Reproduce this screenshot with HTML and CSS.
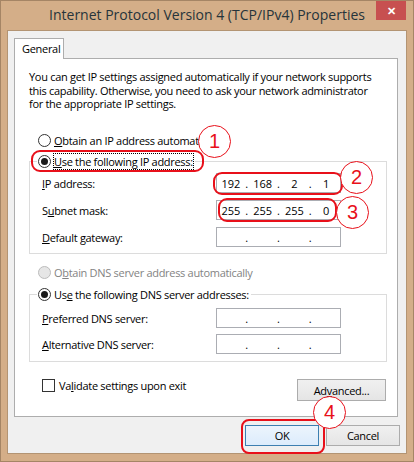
FILE: index.html
```html
<!DOCTYPE html>
<html lang="en">
<head>
    <meta name="viewport" content="width=device-width, initial-scale=1">
    <title>Internet Protocol Version 4 (TCP/IPv4) Properties</title>
    <link rel="stylesheet" href="styles.css">
</head>
<body>

    <div class="window">
        <div class="titlebar">
            <span></span>
            <span class="title">Internet Protocol Version 4 (TCP/IPv4) Properties</span>
            <span class="close-btn">&#x2715;</span>
        </div>

        <div class="client">
            <div class="tabs">
                <div class="tab">General</div>
            </div>

            <div class="panel">
                <p class="intro">You can get IP settings assigned automatically if your network supports this capability. Otherwise, you need to ask your network administrator for the appropriate IP settings.</p>

                <div class="option-row">
                    <span class="radio"></span>
                    <span class="label"><u>O</u>btain an IP address automatically</span>
                </div>

                <fieldset class="group">
                    <legend>
                        <span class="radio checked"></span>
                        <span class="label focused"><u>U</u>se the following IP address:</span>
                    </legend>
                    <div class="field-row">
                        <span class="field-label"><u>I</u>P address:</span>
                        <div class="ip-box">
                            <span>192</span><i>.</i><span>168</span><i>.</i><span>2</span><i>.</i><span>1</span>
                        </div>
                    </div>
                    <div class="field-row">
                        <span class="field-label">S<u>u</u>bnet mask:</span>
                        <div class="ip-box">
                            <span>255</span><i>.</i><span>255</span><i>.</i><span>255</span><i>.</i><span>0</span>
                        </div>
                    </div>
                    <div class="field-row">
                        <span class="field-label"><u>D</u>efault gateway:</span>
                        <div class="ip-box">
                            <span></span><i>.</i><span></span><i>.</i><span></span><i>.</i><span></span>
                        </div>
                    </div>
                </fieldset>

                <div class="option-row dns-auto disabled">
                    <span class="radio"></span>
                    <span class="label">O<u>b</u>tain DNS server address automatically</span>
                </div>

                <fieldset class="group dns-group">
                    <legend>
                        <span class="radio checked"></span>
                        <span class="label">Us<u>e</u> the following DNS server addresses:</span>
                    </legend>
                    <div class="field-row">
                        <span class="field-label"><u>P</u>referred DNS server:</span>
                        <div class="ip-box">
                            <span></span><i>.</i><span></span><i>.</i><span></span><i>.</i><span></span>
                        </div>
                    </div>
                    <div class="field-row">
                        <span class="field-label"><u>A</u>lternative DNS server:</span>
                        <div class="ip-box">
                            <span></span><i>.</i><span></span><i>.</i><span></span><i>.</i><span></span>
                        </div>
                    </div>
                </fieldset>

                <div class="bottom-row">
                    <div class="check-row">
                        <span class="checkbox"></span>
                        <span class="label">Va<u>l</u>idate settings upon exit</span>
                    </div>
                    <button class="btn advanced-btn">Ad<u>v</u>anced...</button>
                </div>
            </div>

            <div class="dialog-buttons">
                <button class="btn ok-btn">OK</button>
                <button class="btn">Cancel</button>
            </div>
        </div>

        <!-- Annotation marks -->
        <div class="mark mark-radio"></div>
        <div class="mark mark-ip"></div>
        <div class="mark mark-mask"></div>
        <div class="mark mark-ok"></div>
        <div class="num num-1">1</div>
        <div class="num num-2">2</div>
        <div class="num num-3">3</div>
        <div class="num num-4">4</div>
    </div>

</body>
</html>
```
FILE: styles.css
```css
/* General */
body {
    margin: 0;
    padding: 0;
    font-family: "Open Sans", "Noto Sans", sans-serif;
    font-size: 11px;
    letter-spacing: -0.3px;
    color: #000;
}

u { text-decoration: underline; text-underline-offset: 1px; }

/* Window frame */
.window {
    position: relative;
    width: 414px;
    height: 462px;
    box-sizing: border-box;
    background-color: #d4ae88;
    border: 1px solid #a58565;
    display: flex;
    flex-direction: column;
}

.titlebar {
    height: 29px;
    display: grid;
    grid-template-columns: 37px 1fr 37px;
    align-items: start;
}

.title {
    text-align: center;
    font-size: 14px;
    letter-spacing: 0;
    color: #26343b;
    line-height: 28px;
    white-space: nowrap;
}

.close-btn {
    width: 30px;
    height: 19px;
    background-color: #c75050;
    color: white;
    font-size: 11px;
    font-weight: bold;
    letter-spacing: 0;
    line-height: 19px;
    text-align: center;
}

.client {
    margin: 0 6px 7px;
    flex: 1;
    background-color: #f0f0f0;
    border: 1px solid #b39473;
    padding: 7px 0 0 6px;
    display: flex;
    flex-direction: column;
}

/* Tab */
.tabs { display: flex; height: 20px; }

.tab {
    position: relative;
    z-index: 1;
    width: 50px;
    height: 21px;
    box-sizing: border-box;
    background: white;
    border: 1px solid #adadad;
    border-bottom: none;
    padding-left: 7px;
    line-height: 20px;
}

.panel {
    width: 384px;
    height: 359px;
    box-sizing: border-box;
    background: white;
    border: 1px solid #adadad;
    padding: 11px 10px 0 14px;
}

.intro {
    margin: 0;
    width: 352px;
    height: 41px;
    line-height: 13.5px;
}

/* Radios and checkbox */
.option-row {
    height: 20px;
    margin-top: 19px;
    padding-left: 9px;
    display: flex;
    align-items: center;
    gap: 3px;
}

.radio {
    width: 13px;
    height: 13px;
    box-sizing: border-box;
    border: 1px solid #333;
    border-radius: 50%;
    background: white;
    display: inline-flex;
    align-items: center;
    justify-content: center;
    flex-shrink: 0;
}

.radio.checked::after {
    content: "";
    width: 7px;
    height: 7px;
    border-radius: 50%;
    background: #1a1a1a;
}

.disabled { color: #838383; }
.disabled .radio { border-color: #bcbcbc; background: #e6e6e6; }

.dns-auto { margin-top: 8px; }

.focused { outline: 1px dotted #000; outline-offset: 0; }

/* Group boxes */
.group {
    margin: 1px 0 0;
    padding: 2px 0 6px;
    border: 1px solid #dcdcdc;
    min-width: 0;
    display: flex;
    flex-direction: column;
    gap: 7px;
}

.group legend {
    margin-left: 7px;
    padding: 0 2px 0 1px;
    height: 20px;
    display: flex;
    align-items: center;
    gap: 3px;
}

.dns-group { margin-top: 2px; padding-top: 4px; padding-bottom: 7px; gap: 6px; }

.field-row {
    height: 20px;
    padding-left: 12px;
    display: flex;
    align-items: center;
}

.field-label { width: 174px; }

.ip-box {
    width: 125px;
    height: 20px;
    box-sizing: border-box;
    border: 1px solid #abadb3;
    display: grid;
    grid-template-columns: 1fr 4px 1fr 4px 1fr 4px 1fr;
    align-items: center;
    text-align: center;
    letter-spacing: 0;
}

.ip-box i { font-style: normal; }

/* Bottom of panel */
.bottom-row {
    margin-top: 17px;
    display: flex;
    justify-content: space-between;
    align-items: flex-start;
}

.check-row {
    padding-left: 13px;
    display: flex;
    align-items: center;
    gap: 4px;
    height: 13px;
}

.checkbox {
    width: 13px;
    height: 13px;
    box-sizing: border-box;
    border: 1px solid #333;
    background: white;
}

.btn {
    width: 74px;
    height: 21px;
    padding: 0;
    font-family: inherit;
    font-size: 11px;
    letter-spacing: -0.3px;
    color: #000;
    background: linear-gradient(#f0f0f0, #e5e5e5);
    border: 1px solid #acacac;
}

.advanced-btn { width: 89px; height: 22px; margin-right: 1px; }

.dialog-buttons {
    margin: 8px 6px 0 0;
    display: flex;
    justify-content: flex-end;
    gap: 7px;
}

.ok-btn { border-color: #3c7fb1; background: linear-gradient(#ecf4fc, #dcecfc); }

/* Red annotations */
.mark {
    position: absolute;
    box-sizing: border-box;
    border: 2px solid #e8101a;
    border-radius: 9px;
}

.mark-radio { left: 30px; top: 149px; width: 173px; height: 22px; }
.mark-ip    { left: 212px; top: 171px; width: 130px; height: 23px; }
.mark-mask  { left: 217px; top: 197px; width: 119px; height: 24px; }
.mark-ok    { left: 240px; top: 418px; width: 84px; height: 35px; border-width: 2.5px; border-radius: 8px; }

.num {
    position: absolute;
    width: 33px;
    height: 33px;
    box-sizing: border-box;
    border: 1.5px solid #e8101a;
    border-radius: 50%;
    background: white;
    color: #e8101a;
    font-family: "Liberation Sans", sans-serif;
    font-size: 20px;
    letter-spacing: 0;
    line-height: 30px;
    text-align: center;
}

.num-1 { left: 197px; top: 124px; }
.num-2 { left: 339px; top: 160px; }
.num-3 { left: 335px; top: 195px; }
.num-4 { left: 312px; top: 395px; }
```
